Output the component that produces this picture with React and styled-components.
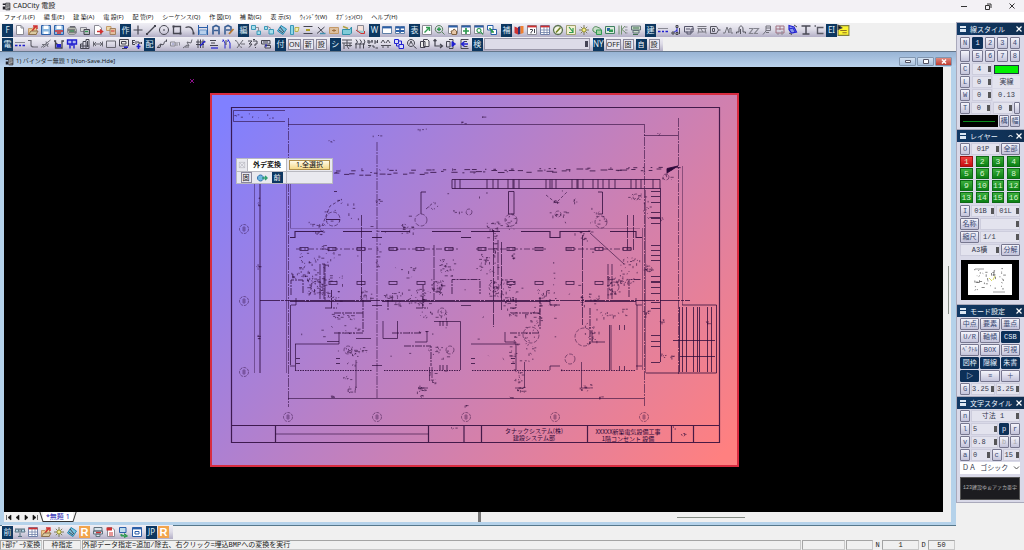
import React from "react";
import styled, { createGlobalStyle, css } from "styled-components";

const Global = createGlobalStyle`
  * { box-sizing: border-box; }
  body { margin: 0; background: #f0f0f0; color: #222; font: 7px/10px "Noto Sans", "Noto Sans CJK JP", sans-serif; overflow: hidden; }
  button, select, input { font: inherit; color: inherit; margin: 0; padding: 0; border: 0; border-radius: 0; }
  button { cursor: pointer; white-space: nowrap; }
`;

const mono = `"Liberation Mono", "Noto Sans CJK JP", monospace`;

/* ---------- application frame ---------- */
const Page = styled.div`
  display: flex;
  flex-direction: column;
  height: 100vh;
`;
const TitleBar = styled.header`
  display: flex;
  align-items: center;
  gap: 2px;
  height: 12px;
  padding-left: 2px;
  background: #f3f1f5;
`;
const WindowControls = styled.div`
  display: flex;
  margin-left: auto;
`;
const WindowControl = styled.button`
  display: grid;
  place-items: center;
  width: 24px;
  height: 11px;
  background: none;
`;
const MenuBar = styled.nav`
  display: flex;
  gap: 9px;
  height: 11px;
  padding-left: 4px;
  background: #fff;
`;
const MenuItem = styled.button`
  background: none;
  font-size: 6px;
  line-height: 11px;
  font-variant-east-asian: proportional-width;
`;
const Main = styled.div`
  display: flex;
  flex: 1;
  min-height: 0;
`;
const Workspace = styled.main`
  display: flex;
  flex-direction: column;
  flex: 1;
  min-width: 0;
`;

/* ---------- toolbars ---------- */
const ToolRow = styled.div`
  display: flex;
  align-items: center;
  height: 14px;
  padding-left: 2px;
`;
const ToolGroup = styled.div`
  display: flex;
  align-items: center;
  gap: ${(p) => p.$gap || 0}px;
  height: 14px;
  padding-right: ${(p) => (p.$tight ? 1 : 3)}px;
  background: ${(p) => (p.$plain ? "none" : "linear-gradient(#f0eff5, #dcdae6 50%, #b3afc6)")};
`;
const GroupLabel = styled.button`
  width: 11px;
  height: 13px;
  background: #0d3760;
  color: #dfeefa;
  font-size: 8px;
  line-height: 12px;
  text-align: center;
`;
const ToolButton = styled.button`
  display: grid;
  place-items: center;
  width: 13px;
  height: 13px;
  background: none;
`;
const TextTool = styled.button`
  min-width: 11px;
  height: 11px;
  border: 1px solid #8a889c;
  background: #e8e7f0;
  font-size: 7px;
  line-height: 9px;
  ${(p) => p.$on && css`background: #0d3760; color: #fff; border-color: #0d3760;`}
`;
const SearchSelect = styled.select`
  appearance: none;
  width: 106px;
  height: 12px;
  margin-left: 1px;
  border: 1px solid #9896a8;
  background: linear-gradient(#445, #445) right 1px center / 3px 6px no-repeat, #dcdbe8;
`;
const OrangeTile = styled.button`
  width: 11px;
  height: 12px;
  margin: 0 1px;
  background: #f2a44c;
  color: #fff;
  font: bold 11px/12px "Liberation Sans", sans-serif;
`;

/* ---------- document window ---------- */
const DocWindow = styled.section`
  display: flex;
  flex-direction: column;
  flex: 1;
  min-height: 0;
  border: solid #b5d2ea;
  border-width: 0 5px 3px 4px;
  box-shadow: 0 1px #56788c;
  background: #f0f0f0;
`;
const DocTitle = styled.div`
  display: flex;
  align-items: center;
  gap: 2px;
  height: 16px;
  margin: 0 -5px 0 -4px;
  padding: 3px 4px 0 5px;
  border-top: 1px solid #66788c;
  background: linear-gradient(#98b4d5, #bcd3ec);
  font-size: 6px;
  font-variant-east-asian: proportional-width;
`;
const DocButtons = styled.div`
  display: flex;
  gap: 1px;
  margin-left: auto;
`;
const DocButton = styled.button`
  display: grid;
  place-items: center;
  width: 17px;
  height: 9px;
  border: 1px solid #8196b0;
  border-radius: 1px;
  background: ${(p) => (p.$close ? "linear-gradient(#dd8a80, #c03c30)" : "linear-gradient(#d4e2f2, #a9c0dc)")};
`;
const DocBody = styled.div`
  display: flex;
  flex: 1;
  min-height: 0;
`;
const Canvas = styled.div`
  position: relative;
  flex: 1;
  overflow: hidden;
  background: #000;
`;
const ScrollTrack = styled.div`
  display: flex;
  align-items: center;
  justify-content: flex-end;
  width: 8px;
  background: #f0f0f0;
`;
const ScrollThumb = styled.div`
  width: ${(p) => (p.$wide ? "68px" : "1px")};
  height: ${(p) => (p.$wide ? "1px" : "48px")};
  margin: ${(p) => (p.$wide ? "0 206px 0 196px" : "0 2px 0 0")};
  background: #858c85;
`;
const DocFooter = styled.div`
  display: flex;
  align-items: center;
  height: 10px;
`;
const SheetNav = styled.div`
  display: flex;
  gap: 2px;
  width: 34px;
  padding-left: 1px;
`;
const SheetNavButton = styled.button`
  display: grid;
  place-items: center;
  width: 7px;
  height: 9px;
  background: none;
`;
const SheetTab = styled.button`
  position: relative;
  height: 10px;
  margin-left: 5px;
  padding: 0 3px;
  border-bottom: 1px solid #333;
  background: #fff;
  color: #1a1ab0;
  line-height: 9px;
  &::before, &::after {
    content: "";
    position: absolute;
    top: 0;
    bottom: -1px;
    width: 1px;
    background: #333;
  }
  &::before { left: -2px; transform: skewX(18deg); }
  &::after { right: -2px; transform: skewX(-18deg); }
`;
const Splitter = styled.div`
  width: 3px;
  height: 10px;
  margin-left: auto;
  border: solid #777;
  border-width: 0 2px 0 1px;
`;
const Sheet = styled.svg`
  position: absolute;
  left: 206px;
  top: 26px;
  width: 529px;
  height: 374px;
  font-family: "Noto Sans CJK JP", sans-serif;
`;
const OriginMark = styled.svg`
  position: absolute;
  left: 186px;
  top: 12px;
`;

/* ---------- floating palette ---------- */
const Palette = styled.div`
  position: absolute;
  left: 232px;
  top: 91px;
  display: grid;
  grid-template-columns: 10px 38px 45px;
  grid-template-rows: 12px 11px;
  gap: 1px;
  border: 1px solid #b9b9c0;
  background: #b9b9c0;
`;
const PaletteCell = styled.div`
  display: flex;
  align-items: center;
  justify-content: center;
  gap: 4px;
  grid-column: span ${(p) => p.$span || 1};
  background: ${(p) => (p.$title ? "#fff" : "#e9e9ef")};
  color: #111;
  font-weight: ${(p) => (p.$title ? 700 : 400)};
`;
const SelectAll = styled.button`
  width: 41px;
  height: 10px;
  border: 1px solid #b08f4c;
  background: linear-gradient(#fffbe8, #f4d98a);
  line-height: 8px;
`;

/* ---------- status bar ---------- */
const StatusBar = styled.footer`
  display: flex;
  align-items: center;
  gap: 1px;
  height: 11px;
  width: calc(100% - 1px);
  font-family: ${mono};
`;
const StatusCell = styled.div`
  flex: ${(p) => (p.$grow ? "1" : "none")};
  width: ${(p) => p.$w || 0}px;
  height: 10px;
  overflow: hidden;
  border: 1px solid;
  border-color: #a4a4a4 #c8c8c8 #c8c8c8 #a4a4a4;
  line-height: 8px;
  white-space: nowrap;
  text-align: ${(p) => (p.$grow ? "left" : "center")};
`;
const StatusLabel = styled.span`
  width: 7px;
  text-align: center;
`;

/* ---------- side panels ---------- */
const Sidebar = styled.aside`
  display: flex;
  flex-direction: column;
  gap: 1px;
  width: 68px;
  padding-left: 1px;
  font-family: ${mono};
  font-size: 8px;
`;
const Panel = styled.section`
  background: #d9d9e8;
  box-shadow: 0 0 0 1px #a9a9bb;
`;
const PanelHead = styled.h2`
  display: flex;
  align-items: center;
  gap: 3px;
  height: 12px;
  margin: 0;
  padding: 0 2px;
  background: linear-gradient(90deg, #123a66, #0f2e50);
  color: #e8f2fa;
  font: 7px/12px "Noto Sans CJK JP", sans-serif;
  font-variant-east-asian: proportional-width;
  white-space: nowrap;
`;
const HeadIcons = styled.span`
  display: flex;
  gap: 3px;
  margin-left: auto;
`;
const PanelBody = styled.div`
  display: flex;
  flex-direction: column;
  gap: 1px;
  padding: ${(p) => p.$top || 1}px 4px ${(p) => p.$bottom || 1}px 3px;
`;
const Row = styled.div`
  display: flex;
  gap: ${(p) => p.$gap || 1}px;
  height: 12px;
  justify-content: space-between;
`;
const Key = styled.button`
  flex: ${(p) => (p.$w ? "none" : "1")};
  width: ${(p) => (p.$w ? `${p.$w}px` : "auto")};
  min-width: 0;
  height: 12px;
  overflow: hidden;
  border: 1px solid #77778f;
  border-radius: 1px;
  background: linear-gradient(#f4f4fb, #c3c3da);
  color: ${(p) => (p.$dim ? "#aaa" : "#3a4a74")};
  font-size: ${(p) => (p.$small ? 6 : 7)}px;
  line-height: 10px;
  text-align: center;
  ${(p) => p.$on && css`background: #0d3058; color: #e6f2ff; border-color: #0d3058;`}
`;
const Pick = styled.select`
  appearance: none;
  flex: ${(p) => (p.$w ? "none" : "1")};
  width: ${(p) => (p.$w ? `${p.$w}px` : "auto")};
  min-width: 0;
  height: 12px;
  padding: 0 5px 0 ${(p) => p.$pad || 0}px;
  background: linear-gradient(#333c, #333c) right 1px center / 3px 6px no-repeat, #e3e3ee;
  box-shadow: inset 0 0 0 1px #cdcddd;
  color: #33384c;
  font-size: 7px;
  text-align: ${(p) => (p.$left ? "left" : "center")};
  text-align-last: ${(p) => (p.$left ? "left" : "center")};
  ${(p) => p.$white && css`width: 100%; background: none; box-shadow: none;`}
`;
const FontField = styled.div`
  display: flex;
  flex: 1;
  align-items: center;
  background: #fff;
`;
const Value = styled.output`
  width: 27px;
  background: #e3e3ee;
  color: #33384c;
  font-size: 7px;
  line-height: 12px;
  text-align: center;
`;
const Swatch = styled.button`
  width: 25px;
  height: 9px;
  margin: 2px 1px;
  border: 1px solid #234;
  background: #00f000;
`;
const LinePreview = styled.div`
  display: grid;
  align-items: center;
  width: 38px;
  padding: 0 3px;
  background: #000;
  &::after { content: ""; height: 1px; background: #0a8a1c; }
`;
const LayerGrid = styled.div`
  display: grid;
  grid-template-columns: repeat(4, 1fr);
  gap: 1px 3px;
  margin-bottom: 1px;
`;
const LayerKey = styled.button`
  height: 11px;
  border: 1px solid ${(p) => (p.$on ? "#a01010" : "#0c6a14")};
  background: ${(p) => (p.$on ? "linear-gradient(#f04040, #c80c10)" : "linear-gradient(#3cae3c, #0c8014)")};
  color: #d8f4d0;
  line-height: 9px;
`;
const Overview = styled.svg`
  display: block;
  width: 58px;
  height: 40px;
  margin: 3px auto;
  background: #000;
`;
const FontSample = styled.div`
  height: 23px;
  margin-top: 2px;
  border: 1px solid #555;
  background: #1c1c20;
  color: #b4b4b4;
  font-size: 5px;
  line-height: 21px;
  text-align: center;
  white-space: nowrap;
`;

/* ---------- icons: lists of [path, stroke, fill, width] on a 12 x 12 grid ---------- */
const K = "#454550", G = "#8a8a94", B = "#2020d0", N = "#2b5fa8", C = "#5fc0dc", R = "#d03030", V = "#2f9a50", T = "#c49a68", W = "#fff", O = "none";
const sheetPath = "M2.5 1.5H7L9.5 4V10.5H2.5Z";
const winPath = "M1.5 2.5H10.5V9.5H1.5Z";
const icons = {
  doc: [[sheetPath, G, W], ["M7 1.5V4H9.5", G]],
  open: [["M1.5 4.5H5L6 3.5H9.5V10.5H1.5Z", T, "#ecc98c"], ["M5 7L9 2M6 2H10V5", R, O, 1.4], ["M1.5 10.5L4 7H11L9 10.5Z", "#8a7050", "#dccaa0"]],
  save: [["M1.5 1.5H10.5V10.5H1.5Z", N, "#8cb8e0"], ["M3.5 1.5H8.5V5H3.5Z", O, W], ["M3.5 7.5H8.5V10H3.5Z", O, W]],
  saveRed: [["M1.5 1.5H10.5V10.5H1.5Z", N, "#8cb8e0"], ["M3.5 1.5H8.5V5H3.5Z", O, W], ["M2 7H10M4 9H8", R, O, 1.5]],
  print: [["M1.5 5L4 2.5H9L10.5 6V9L8 10.5H3L1.5 8Z", G, "#b8bcb0"], ["M2 6H9M3 8H10M4 3L9 3", K], ["M4 7H8", V]],
  plot: [["M1.5 3.5H7.5V7.5H1.5Z", G, "#ddd"], ["M5 5.5H10.5V10.5H5Z", K, "#aeb8b8"], ["M6 7.5H9", V]],
  docOut: [[sheetPath, G, W], ["M5 7.5H10M8 5.5L10.5 7.5L8 9.5", R, R, 1.5]],
  boxes: [["M1.5 2.5H6V6.5H1.5Z", T, "#ecd8a8"], ["M5 4.5H10.5V10.5H5Z", "#a08060", "#e4c0a0"], ["M6 7H9.5", R]],
  plus: [["M6 1.5V10.5M1.5 6H10.5", K, O, 1.2]],
  line: [["M2 10L10 2", K, O, 1.2], ["M1 9H3V11H1ZM9 1H11V3H9Z", O, K]],
  circle: [["M6 1.5A4.5 4.5 0 1 1 5.99 1.5Z", K], ["M5.3 5.3H6.7V6.7H5.3Z", O, K]],
  square: [["M2.5 2.5H9.5V9.5H2.5Z", K, O, 1.3], ["M1.5 1.5H3.5V3.5H1.5ZM8.5 8.5H10.5V10.5H8.5Z", O, K]],
  arc: [["M1.5 3.5C6 1.5 9 4 9.5 9", K, O, 1.3], ["M8.5 8.5H10.5V10.5H8.5Z", O, K]],
  dim: [["M1.5 1V11M10.5 1V11M2 3.5H10", N], ["M2.5 6H9.5V10.5H2.5Z", "#7098c8", "#b8d0ec"]],
  bldA: [["M3 10.5V3L6 1.5L9 3V10.5M4 6.5H8", "#3a5f94", O, 1.7]],
  bldPen: [["M2 10.5V3L5 1.5L8 3V8M3 6H7", "#3a5f94", O, 1.6], ["M6 10L10.5 5", "#b87830", O, 1.8]],
  copy: [["M1.5 1.5H5.5V5.5H1.5ZM7 7H10.5V10.5H7Z", "#3a98b8", "#a8e0ec"], ["M5.5 3.5H8.5V7", G]],
  move: [["M1.5 2.5H4.5V5.5H1.5ZM6 5.5H10.5V10H6Z", "#3a98b8", "#a8e0ec"], ["M4 2L8 4.5", G]],
  rotate: [["M5 1.5L10.5 5L7 10.5L1.5 7Z", "#2a88b0", "#78c4e0"], ["M4 3L8 8M3 6L7 9", K]],
  mirror: [["M1.5 1.5V10.5H4.5V1.5Z", "#3a98b8", "#90d8e8"], ["M6 3.5H10L9 7.5H6Z", "#b8b050", "#f0ecae"]],
  offset: [["M1.5 2.5H10.5M1.5 9.5H10.5", K, O, 1.2], ["M4 6H8", "#b0a020", O, 2]],
  trim: [["M2 9.5L9.5 3M3 3L9 9.5", K], ["M5 9.5H10.5", "#4090b0", O, 1.4]],
  camera: [["M1.5 3.5H10.5V9.5H1.5Z", T, "#ddc0a0"], ["M4 6.5H8M6 5V8", "#a07040"]],
  stretch: [["M1.5 5.5H9L10.5 3V9L9 10.5H1.5Z", "#3090a8", "#80ccd8"], ["M2 2.5L7 4.5", "#b0a040", O, 1.5]],
  erase: [["M3.5 1.5H9.5V7.5H3.5Z", G, "#f6e4dc"], ["M2 6L7 9.5H10.5V7", R, "#98ccd0"]],
  win: [[winPath, "#6080a8", W], ["M1.5 3.5H10.5", N, O, 1.8]],
  tile: [["M1.5 2.5H5.5V9.5H1.5ZM6.5 2.5H10.5V9.5H6.5Z", "#6080a8", W], ["M1.5 3.5H10.5M2 7H10", N, O, 1.8]],
  fit: [["M1.5 1.5H10.5V10.5H1.5Z", G, W], ["M3.5 8.5L8 4M5 3.5H8.5V7", V, O, 1.4]],
  zoom: [["M5 1.5A3.7 3.7 0 1 1 4.99 1.5ZM8 8L10.5 10.5", "#5a8060"], ["M5 3.2V7M3 5.2H7", V, O, 1.5]],
  hand: [["M1.5 1.5H10.5V9.5H1.5Z", G, W], ["M1.5 2.5H10.5", N, O, 2], ["M5 10.5L4 7H5.5L7 5L9.5 7V10.5Z", "#806040", "#e8c8a8"]],
  pan: [["M1.5 1.5H10.5V10.5H1.5Z", G, W], ["M1.5 2.5H10.5", N, O, 2], ["M6 4V10M3 7H9", V, O, 1.7]],
  zoomWin: [["M1.5 1.5H10.5V9.5H1.5Z", G, W], ["M1.5 2.5H10.5", N, O, 2], ["M6 4.5A2 2 0 1 1 5.9 4.5ZM8 8L10 10.5", V, O, 1.2]],
  cascade: [["M1.5 1.5H7V6H1.5ZM5 5.5H10.5V10.5H5Z", N, W], ["M3.5 4L7 8M5 8H8", V, O, 1.6]],
  colors: [["M1.5 2.5L5 4V10.5L1.5 9Z", O, R], ["M5 3L7.5 2V10L5 10.5Z", O, "#303070"], ["M7.5 2H10.5V9L7.5 10Z", O, "#f08030"]],
  help: [["M1.5 1.5H10.5V10.5H1.5Z", G, W], ["M1.5 2.5H10.5", R, O, 1.8], ["M4 5.5H6.5V7L5 8V9.5M8.5 5V9", K]],
  table: [["M1.5 1.5H10.5V10.5H1.5Z", "#7080a8", W], ["M1.5 2.5H10.5", R, O, 1.8], ["M1.5 6H10.5M1.5 8.5H10.5M5 3V10M8 3V10", "#7080a8", O, 0.8]],
  compass: [["M6 1.5A4.5 4.5 0 1 1 5.99 1.5Z", "#5a7050", "#f4f6e4", 1.3], ["M4 8.5L8.5 3.5", "#708020", O, 1.5]],
  jump: [["M1.5 1.5H10.5V10.5H1.5Z", "#a0a070", "#f4f0d0"], ["M4 3L8 8M8 4V8.5H4", V, O, 1.2]],
  sun: [["M6 1V11M1 6H11M2.8 2.8L9.2 9.2M9.2 2.8L2.8 9.2", "#707050", O, 0.9], ["M6 4A2 2 0 1 1 5.99 4Z", "#a09830", "#f0ec90"]],
  cloud: [["M2 7C1 3 5 1.5 7 3.5C10 3.5 11 7 9 9H5Z", "#508858", "#cce0cc"], ["M5.5 6H10.5V10.5H5.5Z", V, "#a0d0a0"]],
  screen: [[winPath, "#408060", "#dcecdc"], ["M3 4H6V7H3Z", O, N], ["M5 5.5H9V8H5Z", O, V]],
  grid: [["M2 1.5V10.5M4.5 1.5V10.5M8 2L5 5.5L9 9", "#70906c"], ["M8 3H10.5M8 6H10.5M8 9H10.5", G]],
  monitor: [["M1.5 2H10.5V6H1.5ZM3 6.5H9V9H3Z", "#607078", "#c8dcc8"], ["M3 10.5H8M3 4H9", "#407050"]],
  dashes: [["M1 4.5H11", G], ["M1 7.5H3.5M5 7.5H7M8.5 7.5H11", B, O, 1.4]],
  nodes: [["M3 9L7 6V3M7 6V9", B], ["M2 8H4V10H2ZM6 1.5H8V3.5H6ZM6 8.5H8V10.5H6ZM9.5 4V10", K, "#ccc"]],
  pc: [["M1.5 2.5H10V8H1.5ZM4 7.5V10H8V5H11M4 4V6M6 4V6", "#55556a"]],
  desk: [["M1.5 2.5H10.5M1.5 4.5H10.5M3 4.5L2 9.5M9 4.5L10 9.5M3 8H9M5 5L7 8", "#75757f"]],
  plug: [["M1.5 2.5H7.5L9.5 6L7.5 9.5H1.5ZM9.5 6H11.5M3.5 4.5H5.5V7.5H3.5Z", "#555560"]],
  wave: [["M1 9H3L5 3L7 9V5L9 4V9H11", "#75757f"]],
  arch: [["M1.5 9.5V8H4V5C4 1 8 1 8 5V8H10.5V9.5M5.5 10V5", "#55555f"]],
  zz: [["M1 4.5H5L1.5 9.5H5M6 4.5H10.5L6.5 9.5H10", "#85858f", O, 1.2]],
  flag: [["M2 10.5L5 7V2H9.5V6.5H5M5 4H9.5M5 8.5H8", "#70707a"]],
  sheetGrid: [["M2 2H10V9H2ZM6 2V6M2 5H10", "#a07080"], ["M4 9V11M8 7V11", G]],
  globe: [["M2 1.5V5.5L4.5 9L9.5 8L7 3Z", B, "#8898e8", 1.2], ["M2 5L6 4L8 8", B], ["M2 9L5 10.5M7 1L10 3", K]],
  beam: [["M1.5 2H10.5M6 2V10M2.5 10H9.5", "#4a4a55", O, 1.5]],
  channel: [["M10.5 3.5H4.5V9.5H10.5M1.5 2H3", "#5a5a65", O, 1.4]],
  zig: [["M1 2.5H4V7C4 9 6 9 7 9H11", "#686872", O, 1.2]],
  slash: [["M1 9.5L10.5 2M3 9.5L9 5.5M2 6.5H6M6 3.5L8 9", "#70707a"]],
  bin: [["M1 3H2.5V10H9V3H11M3 5L5 7", K, O, 1.3], ["M3.5 6H8V9.500H3.5Z", O, B]],
  org: [["M1.5 2H10.5V6H1.5ZM4 6V10.5M8 6V10.5M6 2V8", B, "#b0b8f0", 1.4]],
  city: [["M1.5 10.5V6H4V3.5H7V1.5H10V10.5ZM4 6V10M7 4V10M1.5 8H10M8.5 3V9", K]],
  span: [["M1.5 3.5V8.5M10.5 3.5V8.5M1.5 6H10.5M4 4L2 6L4 8M8 4L10 6L8 8", "#686872"]],
  rect: [["M1.5 3H10.5V9.5H1.5Z", "#686872"]],
  display: [["M1.5 1.5H10.5V8H1.5ZM3.5 3.5H8V6H3.5ZM4 10.5H9", K, "#e8e8e8"], ["M6 8.500H10V10H6Z", O, B]],
  estim: [["M1.5 2.5H4M1.5 4.5H3.5M1.5 2V6.5H4M5 3V6M6 4H8V6M9 4V6M10.5 4V6", K], ["M7.5 6V11M5.5 8.5H9.5", B, O, 1.6]],
  cable: [["M1 9.5C3 9 3 5 6 6.5C9 8 7 2 10.5 3.5V1.5M1 9.5H4L5 6", K]],
  conn: [["M1.5 4H6V8H1.5ZM6 5H9M6 7H9M9.5 4.5H10.5V7.5", G], ["M3 6H5", "#888cc0"]],
  twist: [["M1 10L5 7L7 8L5 4L9 5L10 1.5M3 9H7", "#686872"]],
  shred: [["M3 1.5V10M5.5 1.5V10M8 1.5V10M1 4H10.5M1 6.5H9", K], ["M5 8L10 3", B, O, 1.4]],
  stack: [["M2 2.5H8M3 5H7M2 7.5H10", K, O, 1.2], ["M3 10H10", B, O, 1.2]],
  branch: [["M2 1.5L4 5V10.5M7 1.5L9 5V10.5M1 3.5L3 2M6 3.5L8 2", B], ["M5 2V7", K]],
  fork: [["M1 2.5C5 3 3 8 8 9.5M9 2L3 10M7 6H11", "#686872"]],
  query: [["M1 3H5L2 6H5L2 9.5M6 3H10V6H8V8M8 9.5H9M6 1.5H8", K]],
  truck: [["M1.5 2.5H10V6H1.5ZM3 4H8M5 7.5H10.5V10H5Z", K, "#d0d0e0"], ["M6 6V9", B]],
  seq: [["M1 2H11M1 5H11M3 5V11M6 2V8L8 11M9 5V9M4 7.5H11", "#50505a"]],
  triple: [["M2 1.5L3.5 4L2 6V10.5M6 1.5L7.5 4L6 6V10.5M10 1.5L11 4L9.5 6V10.5M1 6H11", K]],
  data: [["M1 2V5H3V3H1M5 2V5M4 3H6M7 3H9V5H7M10.5 2V5M1 7.5H4L1.5 10M5 8H7V10M8.5 10H11", K]],
  aa: [["M1 5L3 2L5 5M6 5L8 2L10 5M1 7.5H11M3 7V10M8 7V10", "#50505a"]],
  flow: [["M1.5 1.5H5.5V5.5H1.5Z", B, "#d8dcf8"], ["M6 6.5H10.5V10.5H6ZM3.5 5.5V8H6M5.5 3H8.5V6", B, "#d8dcf8"]],
  find: [["M5 1.5A3.5 3.5 0 1 1 4.99 1.5ZM7.5 8L10.5 10.5M3.5 6.5L5 3L6.5 6.5", K]],
  dup: [["M1.5 3.5H6V9.5H1.5ZM4.500 1.5H8.500L10 3V8.500H4.500Z", K, "#eee"]],
  step: [["M3 1.5V8H10.5M8 6L10.5 8L8 10M1.5 3L3 1.5L4.5 3", K, O, 1.2]],
  send: [["M1.5 3.5H5V9H1.5ZM4 1.5H8V10.5H4", K], ["M7 3.5L10.5 6L7 8.5Z", B, B]],
  recv: [["M3 1.5H10.5M3 10.5H10.500M3 1.500V10.500M6 3.500H9M6 8.500H9.5", K], ["M10 6H4M6.500 3.5L3.500 6L6.500 8.5", B, O, 1.3]],
  balance: [["M1 3H11M6 3V10.5M4 10.5H8M2 3L1 6H5L4 3M8 3L7 6H11L10 3", "#557080", "#b8d8e8"]],
  pdf: [[sheetPath, G, W], ["M1.5 1.5H7V4.500H1.5Z", O, R], ["M4 7H8M4 9H8", R]],
  boxRed: [["M2 1.500H10V5H2ZM1.500 5H10.500V8H1.500ZM4 8H8V10.500H4Z", "#60707c", "#d8e4ec"], ["M4 6.5H9", R, O, 1.3]],
  transfer: [["M1.5 1.5H8V6.5H1.5Z", N, "#c0dcec"], ["M3 8V10H8M6 7.5L9.5 10L6 11.5", V, V]],
  frame: [["M1.5 1.5H10.5V10.5H1.5Z", N, W], ["M1.5 2.5H10.5", N, O, 1.8], ["M4 5.5H8V8H4Z", N]],
  app: [["M1 2H5V4H1ZM1 6H4V10H1Z", O, "#202028"], ["M5 1.5H10.5V10.5H5ZM6 4H10M6 6.5H9M7 9H10.5", "#202028", "#c8c8c8"]],
  note: [["M1 1.5H11V10.5H1Z", "#808040", "#fcf430"], ["M1 1L4.5 3.5L1 5Z", K, "#111"], ["M3 6H9M5 8H9", "#907020"]],
  earth: [["M4.5 3A3 3 0 1 1 4.49 3Z", "#3070b0", "#70b8e0"], ["M6 6H11M9 4L11 6L9 8", "#30a070", O, 1.5]],
  closeBox: [["M2 2L10 10M10 2L2 10M2 2H10V10H2Z", "#b4b4bc", O, 0.9]],
};

function Icon({ name, size = 12 }) {
  return (
    <svg width={size} height={size} viewBox="0 0 12 12" aria-hidden="true">
      {icons[name].map(([d, stroke, fill = "none", w = 1], i) => (
        <path key={i} d={d} stroke={stroke} fill={fill} strokeWidth={w} />
      ))}
    </svg>
  );
}

function Tools({ label, names, tight }) {
  return (
    <ToolGroup $tight={tight}>
      <GroupLabel>{label}</GroupLabel>
      {names.split(" ").map((n, i) => (
        <ToolButton key={i} aria-label={n}><Icon name={n} /></ToolButton>
      ))}
    </ToolGroup>
  );
}

/* ---------- drawing sheet ---------- */
function randomizer(seed) {
  let s = seed;
  return () => ((s = (s * 16807) % 2147483647) / 2147483647);
}

function scatter([cx, cy, w, h, n], seed) {
  const r = randomizer(seed);
  let d = "";
  for (let i = 0; i < n * 0.7; i += 1) {
    const x = (cx + (r() - 0.5) * w).toFixed(1);
    const y = (cy + (r() - 0.5) * h).toFixed(1);
    const k = r();
    d += `M${x} ${y}`;
    if (k < 0.45) d += `h${(0.8 + r() * 2.4).toFixed(1)}`;
    else if (k < 0.7) d += `v${(0.8 + r() * 2).toFixed(1)}`;
    else d += `l${(r() * 3 - 1.5).toFixed(1)} ${(r() * 3 - 1.5).toFixed(1)}`;
  }
  return d;
}

/* the broken double line that runs along the site boundary */
function boundary() {
  const r = randomizer(4711);
  let d = "";
  for (let x = 334; x < 680; x += 4 + r() * 7) {
    d += `M${x.toFixed(1)} ${(174 - (x - 334) / 60 + r() * 3 - 1).toFixed(1)}h${(2 + r() * 5).toFixed(1)}`;
    if (r() > 0.4) d += `M${(x + 2).toFixed(1)} ${(171 - (x - 334) / 90).toFixed(1)}h${(1 + r() * 5).toFixed(1)}`;
  }
  return d;
}

const clusters = [
  [508, 171, 346, 6, 20], [258, 116, 48, 6, 14], [332, 141, 6, 2, 5], [377, 135, 8, 2, 3], [422, 129, 8, 2, 5], [465, 123, 8, 2, 5], [484, 116, 4, 3, 4], [661, 134, 6, 2, 4],
  [378, 202, 4, 5, 9], [344, 205, 20, 14, 9], [320, 224, 22, 6, 16], [318, 233, 12, 5, 14], [408, 228, 12, 14, 22], [433, 206, 10, 10, 6], [462, 212, 20, 4, 9],
  [378, 250, 3, 40, 14], [330, 256, 22, 24, 26], [308, 266, 18, 26, 46], [316, 286, 18, 16, 56], [300, 276, 20, 10, 24], [336, 280, 16, 10, 14], [365, 294, 12, 10, 18], [334, 296, 14, 12, 24],
  [392, 298, 18, 16, 36], [417, 297, 26, 14, 42], [437, 287, 12, 14, 42], [447, 268, 16, 18, 36], [404, 274, 26, 14, 14], [422, 298, 6, 18, 16], [342, 317, 28, 6, 22], [350, 330, 18, 10, 12],
  [430, 314, 20, 10, 14], [444, 314, 8, 8, 9], [352, 356, 12, 18, 26], [362, 350, 12, 6, 12], [346, 378, 10, 4, 10], [352, 390, 8, 8, 12], [418, 332, 30, 3, 8], [438, 354, 18, 14, 24], [432, 378, 8, 12, 14], [422, 389, 12, 7, 16],
  [556, 202, 4, 3, 9], [577, 201, 10, 2, 6], [557, 214, 18, 4, 13], [510, 222, 12, 14, 18], [494, 226, 14, 9, 20], [492, 250, 12, 50, 40], [484, 262, 16, 20, 28], [514, 256, 6, 6, 9], [496, 288, 14, 18, 46], [512, 286, 20, 14, 18],
  [544, 298, 14, 16, 36], [510, 302, 14, 14, 26], [522, 314, 32, 4, 20], [534, 325, 22, 18, 24], [522, 349, 26, 28, 50], [520, 377, 10, 12, 22], [519, 390, 10, 6, 15], [554, 290, 2, 60, 14],
  [583, 236, 18, 10, 18], [598, 218, 14, 14, 16], [630, 266, 20, 18, 34], [614, 286, 14, 18, 50], [628, 280, 12, 8, 20], [591, 299, 22, 12, 28], [612, 313, 30, 8, 24], [592, 334, 14, 22, 24], [586, 388, 12, 7, 18],
  [636, 197, 20, 5, 14], [647, 208, 8, 20, 14], [666, 177, 12, 6, 10], [662, 219, 4, 4, 7], [648, 268, 8, 8, 14], [648, 313, 12, 6, 12], [662, 321, 4, 3, 9], [663, 356, 4, 4, 7], [708, 323, 3, 3, 6], [672, 356, 5, 3, 6],
  [332, 397, 6, 2, 8], [421, 396, 6, 2, 5], [466, 405, 5, 2, 5], [510, 397, 5, 2, 5], [600, 397, 5, 2, 5], [258, 202, 2, 8, 7], [258, 266, 2, 6, 6], [258, 336, 2, 6, 6], [451, 428, 10, 1, 3], [675, 428, 4, 1, 2], [683, 434, 5, 3, 6],
  [465, 250, 320, 120, 50], [465, 345, 330, 55, 30],
];

const bays = [295, 384, 472, 561];
const balcony = [452, 455, 460, 487, 493, 498, 508, 513, 514, 519, 546, 550, 552, 556, 572, 577, 578, 583, 593, 598, 603, 609, 615, 631, 636, 641, 653, 660];
const ladders = [191, 196, 202, 212, 217, 218, 223, 245, 250, 255, 260, 276, 281, 282, 287, 293, 302, 308, 335, 341, 346, 362];
const desks = [[304, 249], [332, 249], [361, 249], [393, 249], [420, 249], [449, 249], [482, 249], [511, 249], [539, 249], [570, 249], [599, 249], [627, 249], [333, 283], [361, 283], [393, 283], [421, 283], [511, 283], [539, 283], [570, 283], [599, 283]];
const axes = [[288, 417], [377, 417], [466, 417], [555, 417], [644, 417], [244, 229], [244, 301], [244, 372]];
const rings = [[333, 219, 7], [421, 220, 6], [511, 220, 6], [601, 222, 6], [317, 287, 6], [437, 287, 5], [494, 287, 5], [614, 287, 5], [584, 337, 9], [570, 359, 5], [531, 335, 8], [450, 350, 4], [442, 312, 4], [666, 177, 3], [636, 197, 3], [469, 212, 3], [558, 214, 3], [348, 350, 4], [649, 269, 3]];

function DrawingSheet() {
  return (
    <Sheet viewBox="210 93 529 374" role="img" aria-label="図面">
      <defs>
        <linearGradient id="wash" gradientUnits="userSpaceOnUse" x1="225" y1="110" x2="690" y2="495">
          <stop offset="0" stopColor="#8080ff" />
          <stop offset="1" stopColor="#ff8080" />
        </linearGradient>
      </defs>
      <rect x="211" y="94" width="527" height="372" fill="url(#wash)" stroke="#d82c40" strokeWidth="2" />
      <g fill="none" stroke="#2a0838" strokeOpacity="0.85">
        <path d="M231.5 107.5H719.5V442.5H231.5ZM231.5 425.5H719.5M275.5 425.5V442.5M428.5 425.5V442.5M464 425.5V442.5M481.5 425.5V442.5M587.5 425.5V442.5M671.5 425.5V442.5M693.5 425.5V442.5" strokeWidth="1.2" />
        <path d="M275.5 434H428.5M285 110.5H233.5V121.5H285M288 124.5H644M644 135.5H678M288 398.5H644" strokeWidth="0.7" />
        <path d="M254.5 184V373M286.5 184V373M682.5 166V305M290.5 184V228M645.5 190V373M642.5 228V370" strokeWidth="0.7" strokeOpacity="0.6" />
        <path d="M260 184V373" />
        <path d="M288.5 118V407M377 142V398M644.5 124V407M678.5 118V374" strokeWidth="0.8" strokeDasharray="9 1 2 1" strokeOpacity="0.7" />
        <path d="M290 228.5H640" strokeWidth="0.5" strokeOpacity="0.5" />
        <path d="M260 300.5H690" strokeWidth="0.9" strokeDasharray="20 1 3 1" />
        <path d="M290 301.5H371M382 301.5H550M585 301.5H636" strokeWidth="0.9" />
        <path d="M295 231.5H323M343 231.5H372M381 231.5H410M432 231.5H461M471 231.5H500M521 231.5H550M560 231.5H590M610 231.5H636M290 237.5H295V231M372 237.5H382M461 237.5H471M550 231V237.5H560V231M636 231V237.5H642" strokeWidth="1.1" />
        <path d="M296 249H372M388 249H460M476 249H546M566 249H634" strokeWidth="0.7" strokeDasharray="6 2 2 2" />
        {desks.map(([x, y]) => <rect key={`${x}-${y}`} x={x - 4} y={y - 1.5} width="8" height="3" strokeWidth="0.8" />)}
        <path d={boundary()} strokeWidth="0.9" />
        <path d={`M452 179.5H660M452 188.5H660${balcony.map((x) => `M${x} 179.5V188.5`).join("")}`} strokeWidth="0.9" />
        <path d={`M660.5 188V362${ladders.map((y) => `M651 ${y}.5H660`).join("")}`} strokeWidth="0.9" />
        <path d="M646 373H716.5V305H682M679.5 307V372M682.5 307V372M686.5 307V372M693.5 307V372M697.5 307V372M699.5 307V372M707.5 307V372M711.5 307V372M673 340.5H715M680 356.5H715" strokeWidth="0.9" />
        <path d={bays.map((x, i) => `M${x} 370.5H${[372, 460, 550, 636][i]}`).join("")} strokeWidth="1.2" strokeDasharray="1.5 1" />
        <path d="M295.5 344V370M295 344H339V332M327 341.5H339M290 366H295M471 344H516V370M505 332V342H516M434 321.5H460.5V370M383 321V338.5H397.5V321M415 342H427V331M356 338.5H371M592 330V342H605M609.5 325V370M611 325V370M619.5 325V330M624.5 325V330M619.5 366V370M624.5 366V370M637 305V370M290.5 305V365M291 305H296V298M550 299V305H560M636 298V305H642M372 305.5H382M461 305.5H471M550 370V366H560M636 366H642M372 365.5H382" strokeWidth="0.8" />
        <path d="M296 358.5H300M296 363.5H300M336 358.5H340M336 363.5H340M471 358.5H475M471 363.5H475M511 358.5H515M511 363.5H515M440 321V326M443 321V326M447 321V326M440 365V370M443 365V370M447 365V370M421 192V214M421 192H426M508.5 191.5H514V214H508.5ZM598 192H602.5V214H598M334 191.5H337" strokeWidth="0.9" />
        <path d="M320 264V300M322 264H325V300M361.5 215V300M324 264V300M434 245V300M493.5 230V327M501.5 242V310M498 240V280M582.5 235V325M608 264V300M612 264V300M627.5 215V250M633.5 215V250" strokeWidth="0.8" strokeDasharray="11 1" />
        <path d="M291 295V280H303V293M452 294V279.5H480V294M629 297V279.5H641M331.5 290V308M325 308H337M423 285V308M416 308H428M363 300V333H334M334 313H363M388 300V311M540 297V330M510 308H516V298M510 333H540M511 313H541M590 308V344M404 346H431V366M392 333H422" strokeWidth="0.9" strokeDasharray="7 1 2 1" />
        <path d="M356 360V388M429.5 367V381M524.5 362V388M581.5 362V388H590M418 388H428M432 367V378M515 388H524M590 233L624 264" strokeWidth="0.7" />
        <path d="M546 195L556 203L568 191M322 226L330 206L342 199M426 209L434 202" strokeWidth="0.7" strokeDasharray="3 2" />
        {axes.map(([x, y]) => <g key={`${x}-${y}`} strokeOpacity="0.65"><circle cx={x} cy={y} r="4.5" strokeWidth="0.7" strokeDasharray="3 1" /><path d={`M${x - 1} ${y - 2}h2v4h-2zm0 2h2`} strokeWidth="0.6" /></g>)}
        {rings.map(([x, y, r]) => <circle key={`${x}-${y}`} cx={x} cy={y} r={r} strokeWidth="0.7" strokeDasharray="4 1.5" strokeOpacity="0.7" />)}
        <path d="M326 219.5H340" />
        {clusters.map((c, i) => <path key={i} d={scatter(c, 97 + i * 811)} strokeWidth="0.7" />)}
        <path d="M667 168.5L678 166L667 173Z" fill="#2a0838" />
      </g>
      <g fill="#2c0838" fontSize="6" textAnchor="middle">
        <text x="534" y="433">タナックシステム(株)</text>
        <text x="534" y="440">建設システム部</text>
        <text x="628" y="434">XXXXX新築電気設備工事</text>
        <text x="628" y="441">1階コンセント 設備</text>
      </g>
    </Sheet>
  );
}

/* ---------- side panel pieces ---------- */
function SidePanel({ title, collapsible, top, bottom, children }) {
  return (
    <Panel>
      <PanelHead>
        <svg width="8" height="8" viewBox="0 0 8 8"><rect x="1" y="1" width="6" height="2" fill="#dde8f4" /><rect x="1" y="4" width="6" height="3" fill="#dde8f4" /></svg>
        {title}
        <HeadIcons>
          {collapsible && <svg width="5" height="8" viewBox="0 0 5 8"><path d="M.5 5L2.5 3L4.5 5" stroke="#fff" fill="none" /></svg>}
          <svg width="6" height="8" viewBox="0 0 6 8"><path d="M.5 1.5L5.5 6.5M5.5 1.5L.5 6.5" stroke="#fff" strokeWidth="1.2" /></svg>
        </HeadIcons>
      </PanelHead>
      <PanelBody $top={top} $bottom={bottom}>{children}</PanelBody>
    </Panel>
  );
}

function Choice({ label, value, ...rest }) {
  return (
    <Pick aria-label={label} {...rest}>
      <option>{value}</option>
    </Pick>
  );
}

const modeRows = [
  [["中点"], ["要素"], ["垂点"]],
  [["U/R"], ["軸傾"], ["CSB", true]],
  [["ﾍﾞｸﾄﾙ", false, true], ["BOX"], ["可視"]],
  [["図枠", true], ["隠線", true], ["朱書", true]],
  [["▷", true], ["≡"], ["＋"]],
];

const menus = ["ファイル(F)", "編 集(E)", "建 築(A)", "電 設(F)", "配 管(P)", "シーケンス(Q)", "作 図(D)", "補 助(G)", "表 示(S)", "ｳｨﾝﾄﾞｳ(W)", "ｵﾌﾟｼｮﾝ(O)", "ヘルプ(H)"];

export default function App() {
  return (
    <Page lang="ja">
      <Global />
      <TitleBar>
        <Icon name="app" size={9} />
        CADCity 電設
        <WindowControls>
          <WindowControl aria-label="最小化"><svg width="6" height="6"><path d="M0 3.5H6" stroke="#333" /></svg></WindowControl>
          <WindowControl aria-label="元に戻す"><svg width="7" height="7"><path d="M.5 2.5H4.5V6.5H.5ZM2 1H6V5" stroke="#333" fill="none" /></svg></WindowControl>
          <WindowControl aria-label="閉じる"><svg width="6" height="6"><path d="M.5 .5L5.5 5.5M5.5 .5L.5 5.5" stroke="#333" /></svg></WindowControl>
        </WindowControls>
      </TitleBar>
      <MenuBar>{menus.map((m) => <MenuItem key={m}>{m}</MenuItem>)}</MenuBar>

      <Main>
        <Workspace>
          <ToolRow>
            <Tools label="F" names="doc open save saveRed print plot docOut boxes" />
            <Tools label="作" names="plus line circle square arc dim bldA bldPen" />
            <Tools label="編" names="copy move rotate mirror offset trim camera stretch erase" />
            <Tools label="W" names="win tile" />
            <Tools label="表" names="fit zoom hand pan zoomWin cascade" />
            <Tools label="補" names="colors help table compass jump sun cloud screen grid monitor" />
            <Tools label="建" names="dashes nodes pc desk plug wave arch zz flag sheetGrid globe beam channel" tight />
            <ToolGroup $plain>
              <GroupLabel>EI</GroupLabel>
              <ToolButton aria-label="note"><Icon name="note" size={13} /></ToolButton>
            </ToolGroup>
          </ToolRow>
          <ToolRow>
            <Tools label="電" names="dashes zig slash bin org city span rect display estim" tight />
            <Tools label="配" names="cable conn twist shred stack branch fork query truck" />
            <ToolGroup $gap={2}>
              <GroupLabel>付</GroupLabel>
              <TextTool>ON</TextTool><TextTool>新</TextTool><TextTool>設</TextTool>
            </ToolGroup>
            <Tools label="シ" names="seq triple data aa flow find dup step send recv" tight />
            <ToolGroup>
              <GroupLabel>検</GroupLabel>
              <SearchSelect aria-label="検索"><option> </option></SearchSelect>
            </ToolGroup>
            <ToolGroup $gap={2}>
              <GroupLabel>NY</GroupLabel>
              <TextTool>OFF</TextTool><TextTool>固</TextTool><TextTool $on>自</TextTool><TextTool>設</TextTool>
            </ToolGroup>
          </ToolRow>

          <DocWindow>
            <DocTitle>
              <Icon name="app" size={9} />
              1) バインダー無題 1 [Non-Save.Hde]
              <DocButtons>
                <DocButton aria-label="最小化"><svg width="6" height="4"><path d="M.5 1.5H5.5V3.5H.5Z" stroke="#556" fill="#fff" /></svg></DocButton>
                <DocButton aria-label="最大化"><svg width="6" height="5"><path d="M.5 .5H5.5V4.5H.5Z" stroke="#556" fill="#fff" /></svg></DocButton>
                <DocButton $close aria-label="閉じる"><svg width="6" height="5"><path d="M1 .5L5 4.5M5 .5L1 4.5" stroke="#fff" strokeWidth="1.5" /></svg></DocButton>
              </DocButtons>
            </DocTitle>
            <DocBody>
              <Canvas>
                <OriginMark width="5" height="5"><path d="M0 0L4 4M4 0L0 4" stroke="#8a108a" /></OriginMark>
                <DrawingSheet />
                <Palette>
                  <PaletteCell><Icon name="closeBox" size={8} /></PaletteCell>
                  <PaletteCell $title>外デ変換</PaletteCell>
                  <PaletteCell><SelectAll>1.全選択</SelectAll></PaletteCell>
                  <PaletteCell $span={2}>
                    <TextTool>固</TextTool>
                    <Icon name="earth" />
                    <TextTool $on>前</TextTool>
                  </PaletteCell>
                  <PaletteCell />
                </Palette>
              </Canvas>
              <ScrollTrack><ScrollThumb /></ScrollTrack>
            </DocBody>
            <DocFooter>
              <SheetNav>
                {["M1.5 2V7M6 2L3 4.5L6 7Z", "M5 2L2 4.5L5 7Z", "M2 2L5 4.5L2 7Z", "M5.5 2V7M1 2L4 4.5L1 7Z"].map((d) => (
                  <SheetNavButton key={d} aria-label="シート移動"><svg width="7" height="9"><path d={d} fill="#111" stroke="#111" strokeWidth=".6" /></svg></SheetNavButton>
                ))}
              </SheetNav>
              <SheetTab>*無題 1</SheetTab>
              <Splitter />
              <ScrollThumb $wide />
            </DocFooter>
          </DocWindow>

          <ToolRow>
            <ToolGroup>
              <GroupLabel>前</GroupLabel>
              {["balance", "table", "open", "sun", "rotate"].map((n) => <ToolButton key={n} aria-label={n}><Icon name={n} /></ToolButton>)}
              <OrangeTile>R</OrangeTile>
              {["boxRed", "pdf", "transfer", "frame"].map((n) => <ToolButton key={n} aria-label={n}><Icon name={n} /></ToolButton>)}
            </ToolGroup>
            <ToolGroup>
              <GroupLabel>JP</GroupLabel>
              <OrangeTile>R</OrangeTile>
            </ToolGroup>
          </ToolRow>
          <StatusBar>
            <StatusCell $w={42}>ﾄ部ﾃﾞｰﾀ変換</StatusCell>
            <StatusCell $w={38}>枠指定</StatusCell>
            <StatusCell $grow>外部データ指定=追加/除去、右クリック=埋込BMPへの変換を実行</StatusCell>
            <StatusCell $w={43} />
            <StatusCell $w={27} />
            <StatusLabel>N</StatusLabel>
            <StatusCell $w={37}>1</StatusCell>
            <StatusLabel>D</StatusLabel>
            <StatusCell $w={27}>50</StatusCell>
          </StatusBar>
        </Workspace>

        <Sidebar>
          <SidePanel title="線スタイル" top={2} bottom={2}>
            <Row $gap={2}>
              <Key>N</Key><Key $on>1</Key><Key>2</Key><Key>3</Key><Key>4</Key>
            </Row>
            <Row $gap={2}>
              <Key aria-label="なし" /><Key>5</Key><Key>6</Key><Key>7</Key><Key>8</Key>
            </Row>
            <Row><Key $w={10}>C</Key><Choice label="線色" value="4" $w={20} /><Swatch aria-label="色見本" /></Row>
            <Row><Key $w={10}>L</Key><Choice label="線種" value="0" $w={20} /><Value>実線</Value></Row>
            <Row><Key $w={10}>W</Key><Choice label="線幅" value="0" $w={20} /><Value>0.13</Value></Row>
            <Row><Key $w={10}>T</Key><Choice label="端点" value="0" $w={20} /><Choice label="端点種別" value="0" $w={20} /><Key $w={6} aria-label="詳細" /></Row>
            <Row><LinePreview /><Key $w={10}>構</Key><Key $w={10}>幅</Key></Row>
          </SidePanel>

          <SidePanel title="レイヤー" collapsible>
            <Row><Key $w={10}>O</Key><Choice label="レイヤー" value="01P" /><Key $w={19}>全部</Key></Row>
            <LayerGrid>
              {Array.from({ length: 16 }, (_, i) => <LayerKey key={i} $on={i === 0}>{i + 1}</LayerKey>)}
            </LayerGrid>
            <Row><Key $w={10}>I</Key><Choice label="入力" value="01B" /><Choice label="入力層" value="01L" /></Row>
            <Row><Key $w={19}>名称</Key><Choice label="名称" value="" /></Row>
            <Row><Key $w={19}>縮尺</Key><Choice label="縮尺" value="1/1" $left $pad={3} /></Row>
            <Row><Choice label="用紙" value="A3横" $pad={4} /><Key $w={19}>分解</Key></Row>
            <Overview viewBox="0 0 58 40">
              <rect x="7" y="4" width="44" height="31" fill="#fff" />
              <path d={scatter([29, 19, 32, 22, 60], 31)} stroke="#555" strokeWidth=".7" />
              <path d="M14 9h9M32 32h12" stroke="#777" strokeWidth=".7" />
              <path d="M28 18l3 3M34 16l-2 4" stroke="#d8d860" />
            </Overview>
          </SidePanel>

          <SidePanel title="モード設定">
            {modeRows.map((row, i) => (
              <Row key={i}>{row.map(([t, on, small]) => <Key key={t} $on={on} $small={small}>{t}</Key>)}</Row>
            ))}
            <Row><Key $w={10}>G</Key><Choice label="グリッドX" value="3.25" /><Choice label="グリッドY" value="3.25" /></Row>
          </SidePanel>

          <SidePanel title="文字スタイル" bottom={2}>
            <Row><Key $w={10}>n</Key><Choice label="文字種" value="寸法 1" /></Row>
            <Row><Key $w={10}>l</Key><Choice label="文字高" value="5" $left $pad={2} /><Key $w={10} $on>p</Key><Key $w={10}>r</Key></Row>
            <Row><Key $w={10}>v</Key><Choice label="横縦比" value="0.8" $left $pad={2} /><Key $w={10} $dim>b</Key><Key $w={10} $dim>i</Key></Row>
            <Row><Key $w={10}>a</Key><Choice label="角度" value="0" $left $pad={2} /><Key $w={10}>c</Key><Choice label="間隔" value="15" /></Row>
            <Row>
              <FontField>
                <Choice label="書体" value="ＤＡ ゴシック" $white $left $pad={2} />
                <svg width="7" height="6"><path d="M1 1.5L3.5 4L6 1.5" stroke="#555" fill="none" /></svg>
              </FontField>
            </Row>
            <FontSample>123建設ゆぉアァカ亜宇</FontSample>
          </SidePanel>
        </Sidebar>
      </Main>
    </Page>
  );
}
